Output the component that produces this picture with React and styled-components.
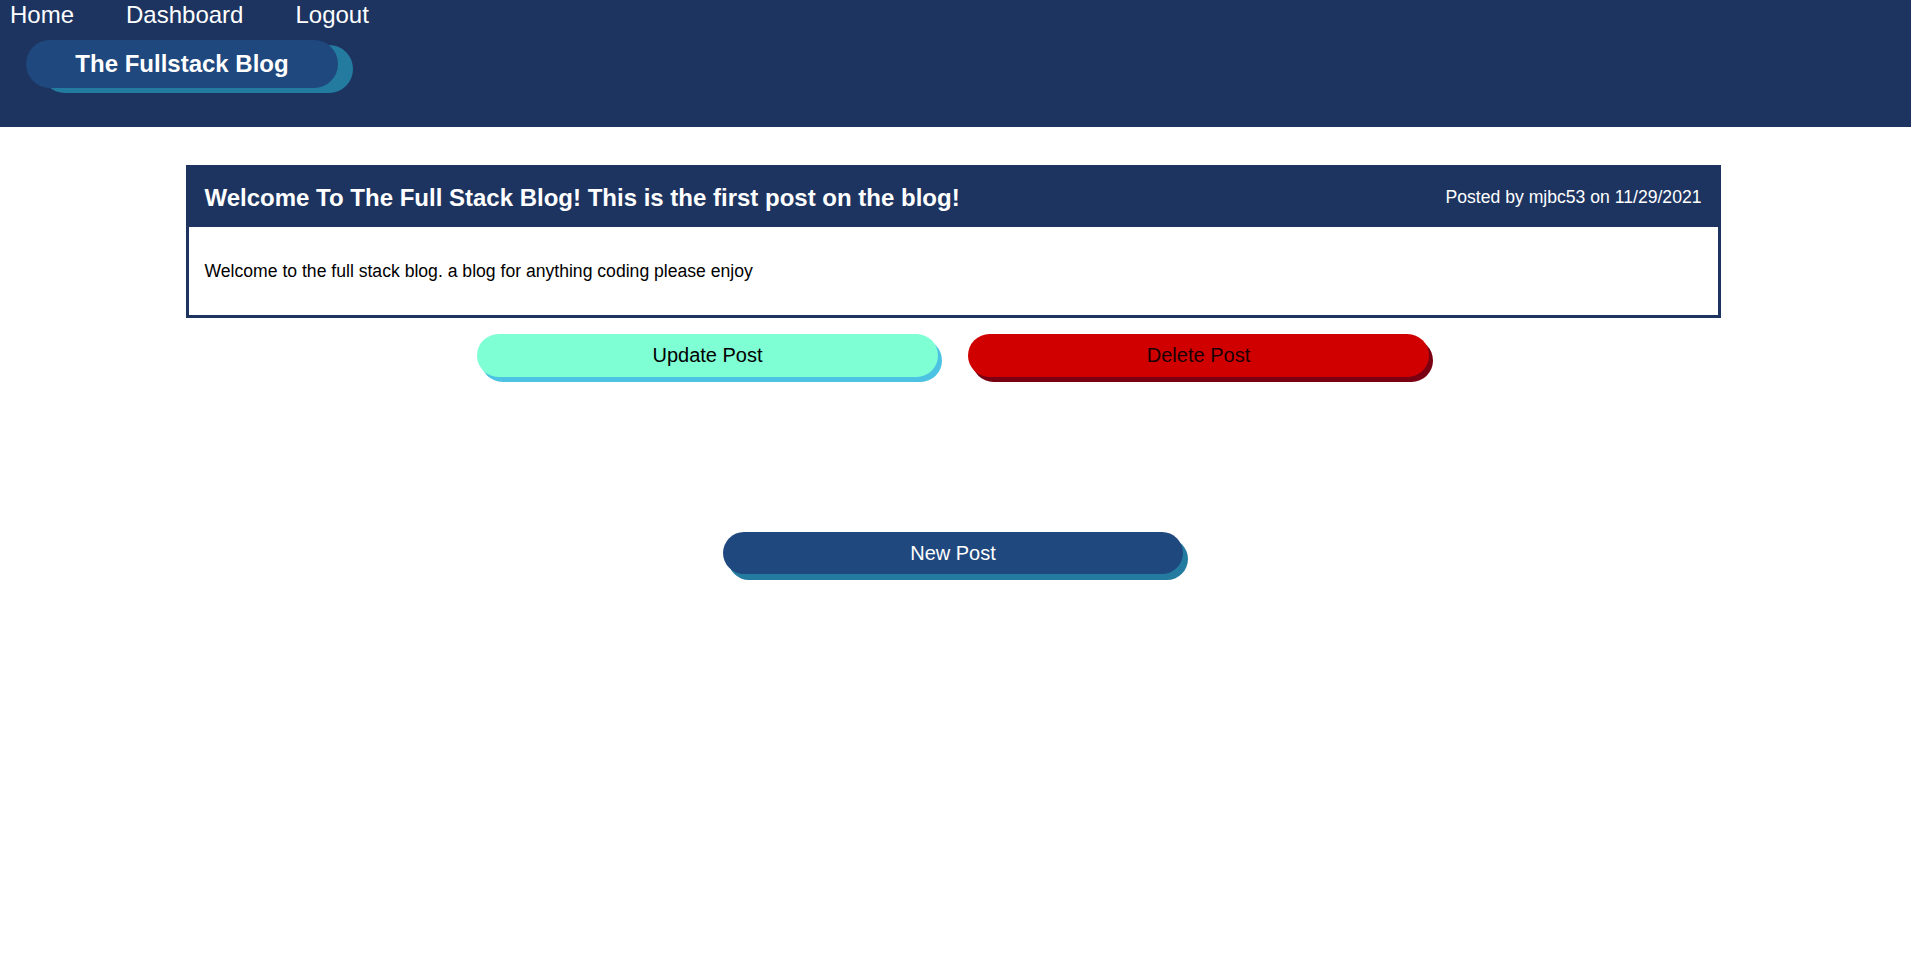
import styled, { createGlobalStyle } from "styled-components";

const GlobalStyle = createGlobalStyle`
  body {
    margin: 0;
    background: #ffffff;
    font-family: "Liberation Sans", Arial, sans-serif;
  }
`;

const HEADER = styled.header`
  height: 127px;
  background-color: #1d3461;
  padding: 1px 10px 0;
  box-sizing: border-box;
`;

const NAV = styled.nav`
  display: flex;
  gap: 52px;
`;

const NAVLINK = styled.a`
  color: #ffffff;
  font-size: 24px;
  text-decoration: none;
  cursor: pointer;
`;

const TITLEPILL = styled.h1`
  display: flex;
  align-items: center;
  justify-content: center;
  width: 312px;
  height: 48px;
  margin: 11px 0 0 16px;
  border-radius: 24px;
  background-color: #1f487e;
  box-shadow: 15px 5px 0 #247ba0;
  color: #ffffff;
  font-size: 24px;
  font-weight: 700;
`;

const MAIN = styled.main`
  display: flex;
  flex-direction: column;
  align-items: center;
  padding: 38px 5px 40px 0;
`;

const CARD = styled.article`
  width: 1535px;
  box-sizing: border-box;
  border: 3px solid #1d3461;
`;

const CARDHEAD = styled.div`
  display: flex;
  align-items: center;
  justify-content: space-between;
  height: 59px;
  padding: 0 16px;
  background-color: #1d3461;
  color: #ffffff;
`;

const CARDTITLE = styled.h2`
  margin: 0;
  font-size: 24px;
  font-weight: 700;
`;

const META = styled.span`
  font-size: 17.6px;
`;

const CARDBODY = styled.div`
  padding: 16px;
  font-size: 17.6px;
  color: #000000;

  p {
    margin: 1em 0;
  }
`;

const ACTIONS = styled.div`
  display: flex;
  gap: 30px;
  margin-top: 16px;
`;

const PILLBUTTON = styled.button`
  width: ${(p) => p.$width || 461}px;
  height: ${(p) => p.$height || 43}px;
  border: none;
  border-radius: 22px;
  background-color: ${(p) => p.$bg};
  box-shadow: ${(p) => p.$offset || "4px 5px"} 0 ${(p) => p.$shadow};
  color: ${(p) => p.$color || "#000000"};
  font-family: "Liberation Sans", Arial, sans-serif;
  font-size: 20px;
  cursor: pointer;
`;

const NEWPOSTWRAP = styled.div`
  margin-top: 155px;
`;

function App() {
  return (
    <>
      <GlobalStyle />
      <HEADER>
        <NAV>
          <NAVLINK>Home</NAVLINK>
          <NAVLINK>Dashboard</NAVLINK>
          <NAVLINK>Logout</NAVLINK>
        </NAV>
        <TITLEPILL>The Fullstack Blog</TITLEPILL>
      </HEADER>
      <MAIN>
        <CARD>
          <CARDHEAD>
            <CARDTITLE>
              Welcome To The Full Stack Blog! This is the first post on the blog!
            </CARDTITLE>
            <META>Posted by mjbc53 on 11/29/2021</META>
          </CARDHEAD>
          <CARDBODY>
            <p>Welcome to the full stack blog. a blog for anything coding please enjoy</p>
          </CARDBODY>
        </CARD>
        <ACTIONS>
          <PILLBUTTON $bg="#7fffd4" $shadow="#4cc3e3">
            Update Post
          </PILLBUTTON>
          <PILLBUTTON $bg="#d00000" $shadow="#790012" $color="#1a0000">
            Delete Post
          </PILLBUTTON>
        </ACTIONS>
        <NEWPOSTWRAP>
          <PILLBUTTON
            $bg="#1f487e"
            $shadow="#247ba0"
            $color="#ffffff"
            $width={460}
            $height={42}
            $offset="5px 6px"
          >
            New Post
          </PILLBUTTON>
        </NEWPOSTWRAP>
      </MAIN>
    </>
  );
}

export default App;
